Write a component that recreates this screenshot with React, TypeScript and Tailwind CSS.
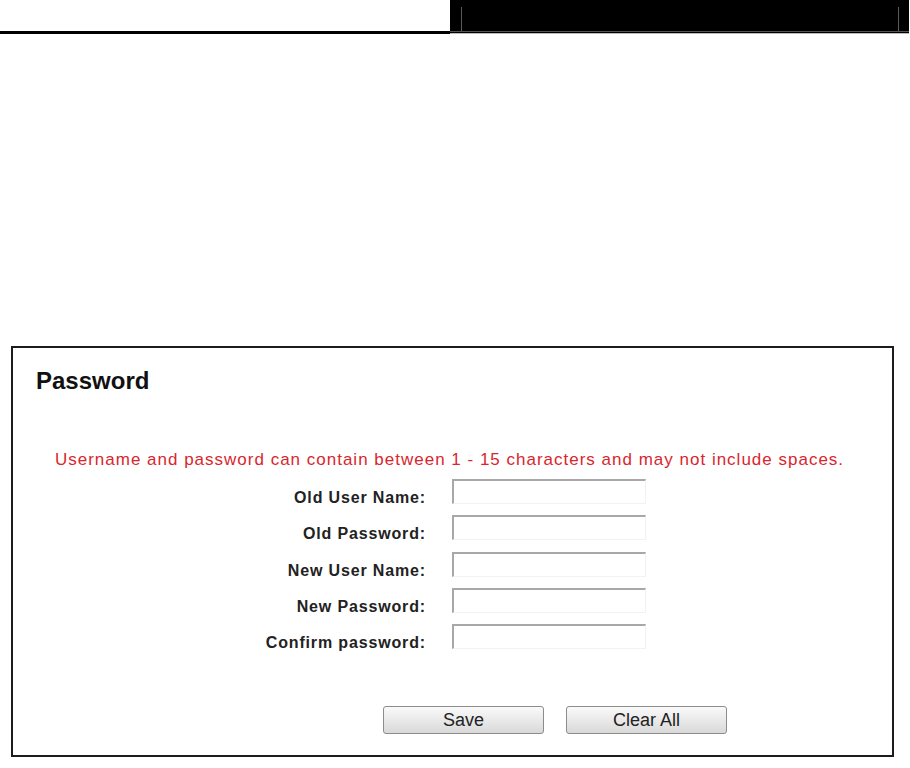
import React from 'react';

const FIELDS = [
  'Old User Name:',
  'Old Password:',
  'New User Name:',
  'New Password:',
  'Confirm password:',
];

const Header = () => (
  <div>
    <div className="flex h-[31px]">
      <div className="w-[450px]" />
      <div className="flex h-full w-[459px] items-end bg-black pl-[11px] pr-[10px]">
        <div className="h-[24px] w-px bg-[#5a5a5a]" />
        <div className="flex-1" />
        <div className="h-[24px] w-px bg-[#5a5a5a]" />
      </div>
    </div>
    <div className="flex h-[3px]">
      <div className="h-full w-[450px] bg-black" />
      <div className="flex h-full w-[459px] flex-col">
        <div className="h-px bg-[#555]" />
        <div className="h-px bg-black" />
        <div className="h-px bg-[#bbb]" />
      </div>
    </div>
  </div>
);

const Field = ({ label }: { label: string }) => (
  <div className="flex h-[36.3px] items-start">
    <label className="mt-[9px] w-[413px] text-right text-[16px] font-bold leading-[20px] tracking-[0.85px] text-[#222]">
      {label}
    </label>
    <input
      type="text"
      className="ml-[26px] h-[25px] w-[194px] border-t-2 border-l-2 border-r border-b border-t-[#a8a8a8] border-l-[#a8a8a8] border-r-[#f2f2f2] border-b-[#f2f2f2] bg-white outline-none"
    />
  </div>
);

const Button = ({ children }: { children: React.ReactNode }) => (
  <button
    type="button"
    className="h-[28px] w-[161px] rounded-[3px] border border-[#8c8c8c] bg-gradient-to-b from-[#fafafa] to-[#d9d9d9] text-[18px] leading-none text-[#222]"
  >
    {children}
  </button>
);

export default function App() {
  return (
    <div
      className="min-h-[768px] w-[910px] bg-white"
      style={{ fontFamily: '"Liberation Sans", Arial, sans-serif' }}
    >
      <Header />
      <div className="ml-[11px] mt-[312px] h-[411px] w-[883px] border-2 border-[#1c1c1c]">
        <h1 className="pl-[23px] pt-[19px] text-[24px] font-bold leading-[28px] text-[#111]">
          Password
        </h1>
        <p className="mt-[55px] pr-[6px] text-center text-[17px] leading-[20px] tracking-[1px] text-[#d9262e]">
          Username and password can contain between 1 - 15 characters and may not include spaces.
        </p>
        <div className="mt-[9px]">
          {FIELDS.map((f) => (
            <Field key={f} label={f} />
          ))}
        </div>
        <div className="mt-[46px] flex gap-[22px] pl-[370px]">
          <Button>Save</Button>
          <Button>Clear All</Button>
        </div>
      </div>
    </div>
  );
}
